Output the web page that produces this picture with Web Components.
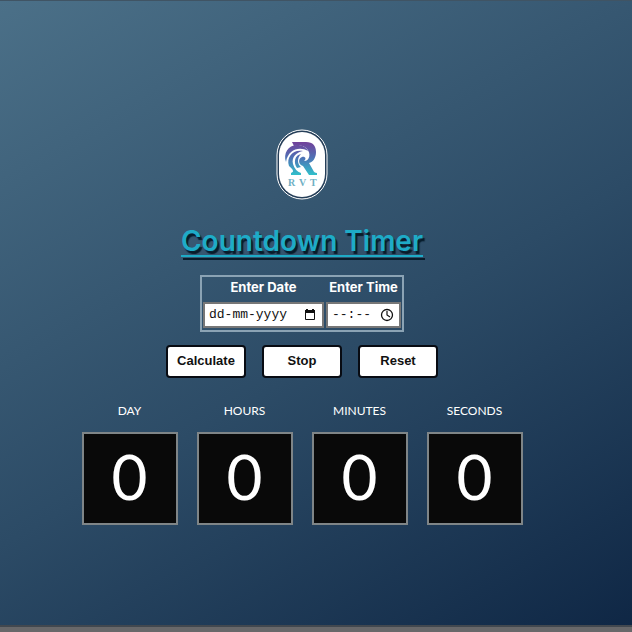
<!DOCTYPE html>
<html lang="en">
<head>
<meta charset="utf-8">
<title>Countdown Timer</title>
<style>
html, body { height: 100%; margin: 0; }
body { font-family: Inter, "Open Sans", sans-serif; color: #fff; }
</style>
</head>
<body>
<countdown-page></countdown-page>
<script>
const define = (name, html) => customElements.define(name, class extends HTMLElement {
  constructor() {
    super();
    const t = document.createElement('template');
    t.innerHTML = html(this);
    this.attachShadow({ mode: 'open' }).append(t.content.cloneNode(true));
  }
});

define('brand-logo', () => `
<style>
:host { display: block; width: 52px; height: 72px; }
svg { display: block; }
text { font: 700 10px "Liberation Serif", serif; fill: #6fb0c4; }
</style>
<svg width="52" height="72" viewBox="0 0 52 72" role="img" aria-label="RVT">
  <defs><linearGradient id="g" x1="0" y1="14" x2="0" y2="48" gradientUnits="userSpaceOnUse">
    <stop offset="0" stop-color="#72409a"/><stop offset=".45" stop-color="#4f70b4"/><stop offset="1" stop-color="#2fc4cc"/>
  </linearGradient></defs>
  <rect x="1" y="2" width="50" height="69" rx="25" fill="#263f59" stroke="#fff"/>
  <rect x="3" y="4" width="46" height="65" rx="23" fill="#fff"/>
  <g fill="url(#g)">
    <path d="M16 14H30C37 14 40 18 40 24C40 30 37 34 33 35L37 42Q38 45 41 45V47H33L27 38C22 37 22 30 26 29C29 28 31 31 28 33C34 33 35 25 31 21C28 17 23 17 18 18Z"/>
    <path d="M10 34C7 26 12 17 21 17C26 17 30 19 32 23C24 18 12 21 10 34Z"/>
    <path d="M13 38C10 29 17 21 27 23C21 24 15 29 17 36Q19 43 25 45V47H15V45C18 44 18 42 13 38Z"/>
    <path d="M21 40C17 34 19 27 25 26C21 30 21 36 25 39Z"/>
  </g>
  <text x="12" y="58">R</text><text x="23" y="58">V</text><text x="34" y="58">T</text>
</svg>`);

define('picker-field', el => {
  const id = el.getAttribute('kind');
  const icon = id === 'date'
    ? '<path d="M2.5 2.5h9v9h-9z" fill="none" stroke="#111"/><path d="M2 2h10v3H2zM3 1h2v1H3zM9 1h2v1H9z" fill="#111"/>'
    : '<circle cx="7" cy="7" r="5.5" fill="none" stroke="#111" stroke-width="1.3"/><path d="M7 3v4l3 2" fill="none" stroke="#111" stroke-width="1.2"/>';
  return `
<style>
:host { display: flex; flex-direction: column; align-items: center; }
label { font-size: 13px; font-weight: 700; line-height: 20px; margin-bottom: 5px; white-space: nowrap; }
.box { display: flex; align-items: center; box-sizing: border-box; height: 26px; padding: 0 5px 0 4px; background: #fff; border: 2px solid #777; }
input { border: 0; padding: 0; margin: 0; background: none; outline: 0; color: #111; font: 13px "Liberation Mono", monospace; }
input::placeholder { color: #111; opacity: 1; }
.date { width: 80px; margin-right: 14px; }
.time { width: 40px; margin-right: 8px; }
button { border: 0; padding: 0; background: none; display: block; height: 16px; }
svg { display: block; }
</style>
<label for="${id}"><slot></slot></label>
<div class="box">
  <input id="${id}" class="${id}" type="text" placeholder="${el.getAttribute('hint')}">
  <button type="button" aria-label="Open ${id} picker"><svg width="14" height="14" viewBox="0 0 14 14">${icon}</svg></button>
</div>`; });

define('action-button', () => `
<style>
:host { display: block; }
button { box-sizing: border-box; width: 80px; height: 33px; padding: 0 0 2px; border: 2px solid #080b12; border-radius: 4px; background: #fff; color: #111; font: 700 13px "Liberation Sans", Arial, sans-serif; }
</style>
<button type="button"><slot></slot></button>`);

define('time-tile', () => `
<style>
:host { display: flex; flex: 0 1 96px; flex-direction: column; align-items: center; }
.label { font-family: Lato, sans-serif; font-size: 12px; line-height: 18px; margin-bottom: 12px; }
.value { box-sizing: border-box; width: 100%; height: 93px; display: grid; place-items: center; background: #090909; border: 2px solid #7f8587; font-family: Lato, sans-serif; font-size: 62px; line-height: 84px; padding-bottom: 4px; }
</style>
<div class="label"><slot></slot></div>
<div class="value"><slot name="value"></slot></div>`);

define('countdown-page', () => `
<style>
:host { display: flex; flex-direction: column; box-sizing: border-box; min-height: 100vh; border-top: 1px solid #405464; border-bottom: 5px solid #68686a; background: linear-gradient(150deg, #4b7088, #2c4b66 55%, #0f2745) padding-box; }
main { flex: 1; display: flex; flex-direction: column; align-items: center; justify-content: center; padding: 26px 28px 0 0; border-bottom: 2px solid #42484f; }
h1 { margin: 24px 0 16px; font-size: 28px; line-height: 35px; font-weight: 600; color: #1eabc7; text-shadow: 2px 3px 1px #071c2b; text-decoration: underline; text-decoration-thickness: 2px; text-underline-offset: 4px; text-decoration-skip-ink: none; }
form { display: flex; gap: 2px; box-sizing: border-box; border: 2px solid #8ba3b4; padding: 0 1px 2px; }
.actions { display: flex; gap: 16px; margin: 13px 0 24px; }
.tiles { display: flex; justify-content: center; width: 100%; gap: 19px; }
</style>
<main>
  <brand-logo></brand-logo>
  <h1>Countdown Timer</h1>
  <form>
    <picker-field kind="date" hint="dd-mm-yyyy">Enter Date</picker-field>
    <picker-field kind="time" hint="--:--">Enter Time</picker-field>
  </form>
  <div class="actions">
    <action-button>Calculate</action-button>
    <action-button>Stop</action-button>
    <action-button>Reset</action-button>
  </div>
  <div class="tiles">
    <time-tile>DAY<span slot="value">0</span></time-tile>
    <time-tile>HOURS<span slot="value">0</span></time-tile>
    <time-tile>MINUTES<span slot="value">0</span></time-tile>
    <time-tile>SECONDS<span slot="value">0</span></time-tile>
  </div>
</main>`);
</script>
</body>
</html>
